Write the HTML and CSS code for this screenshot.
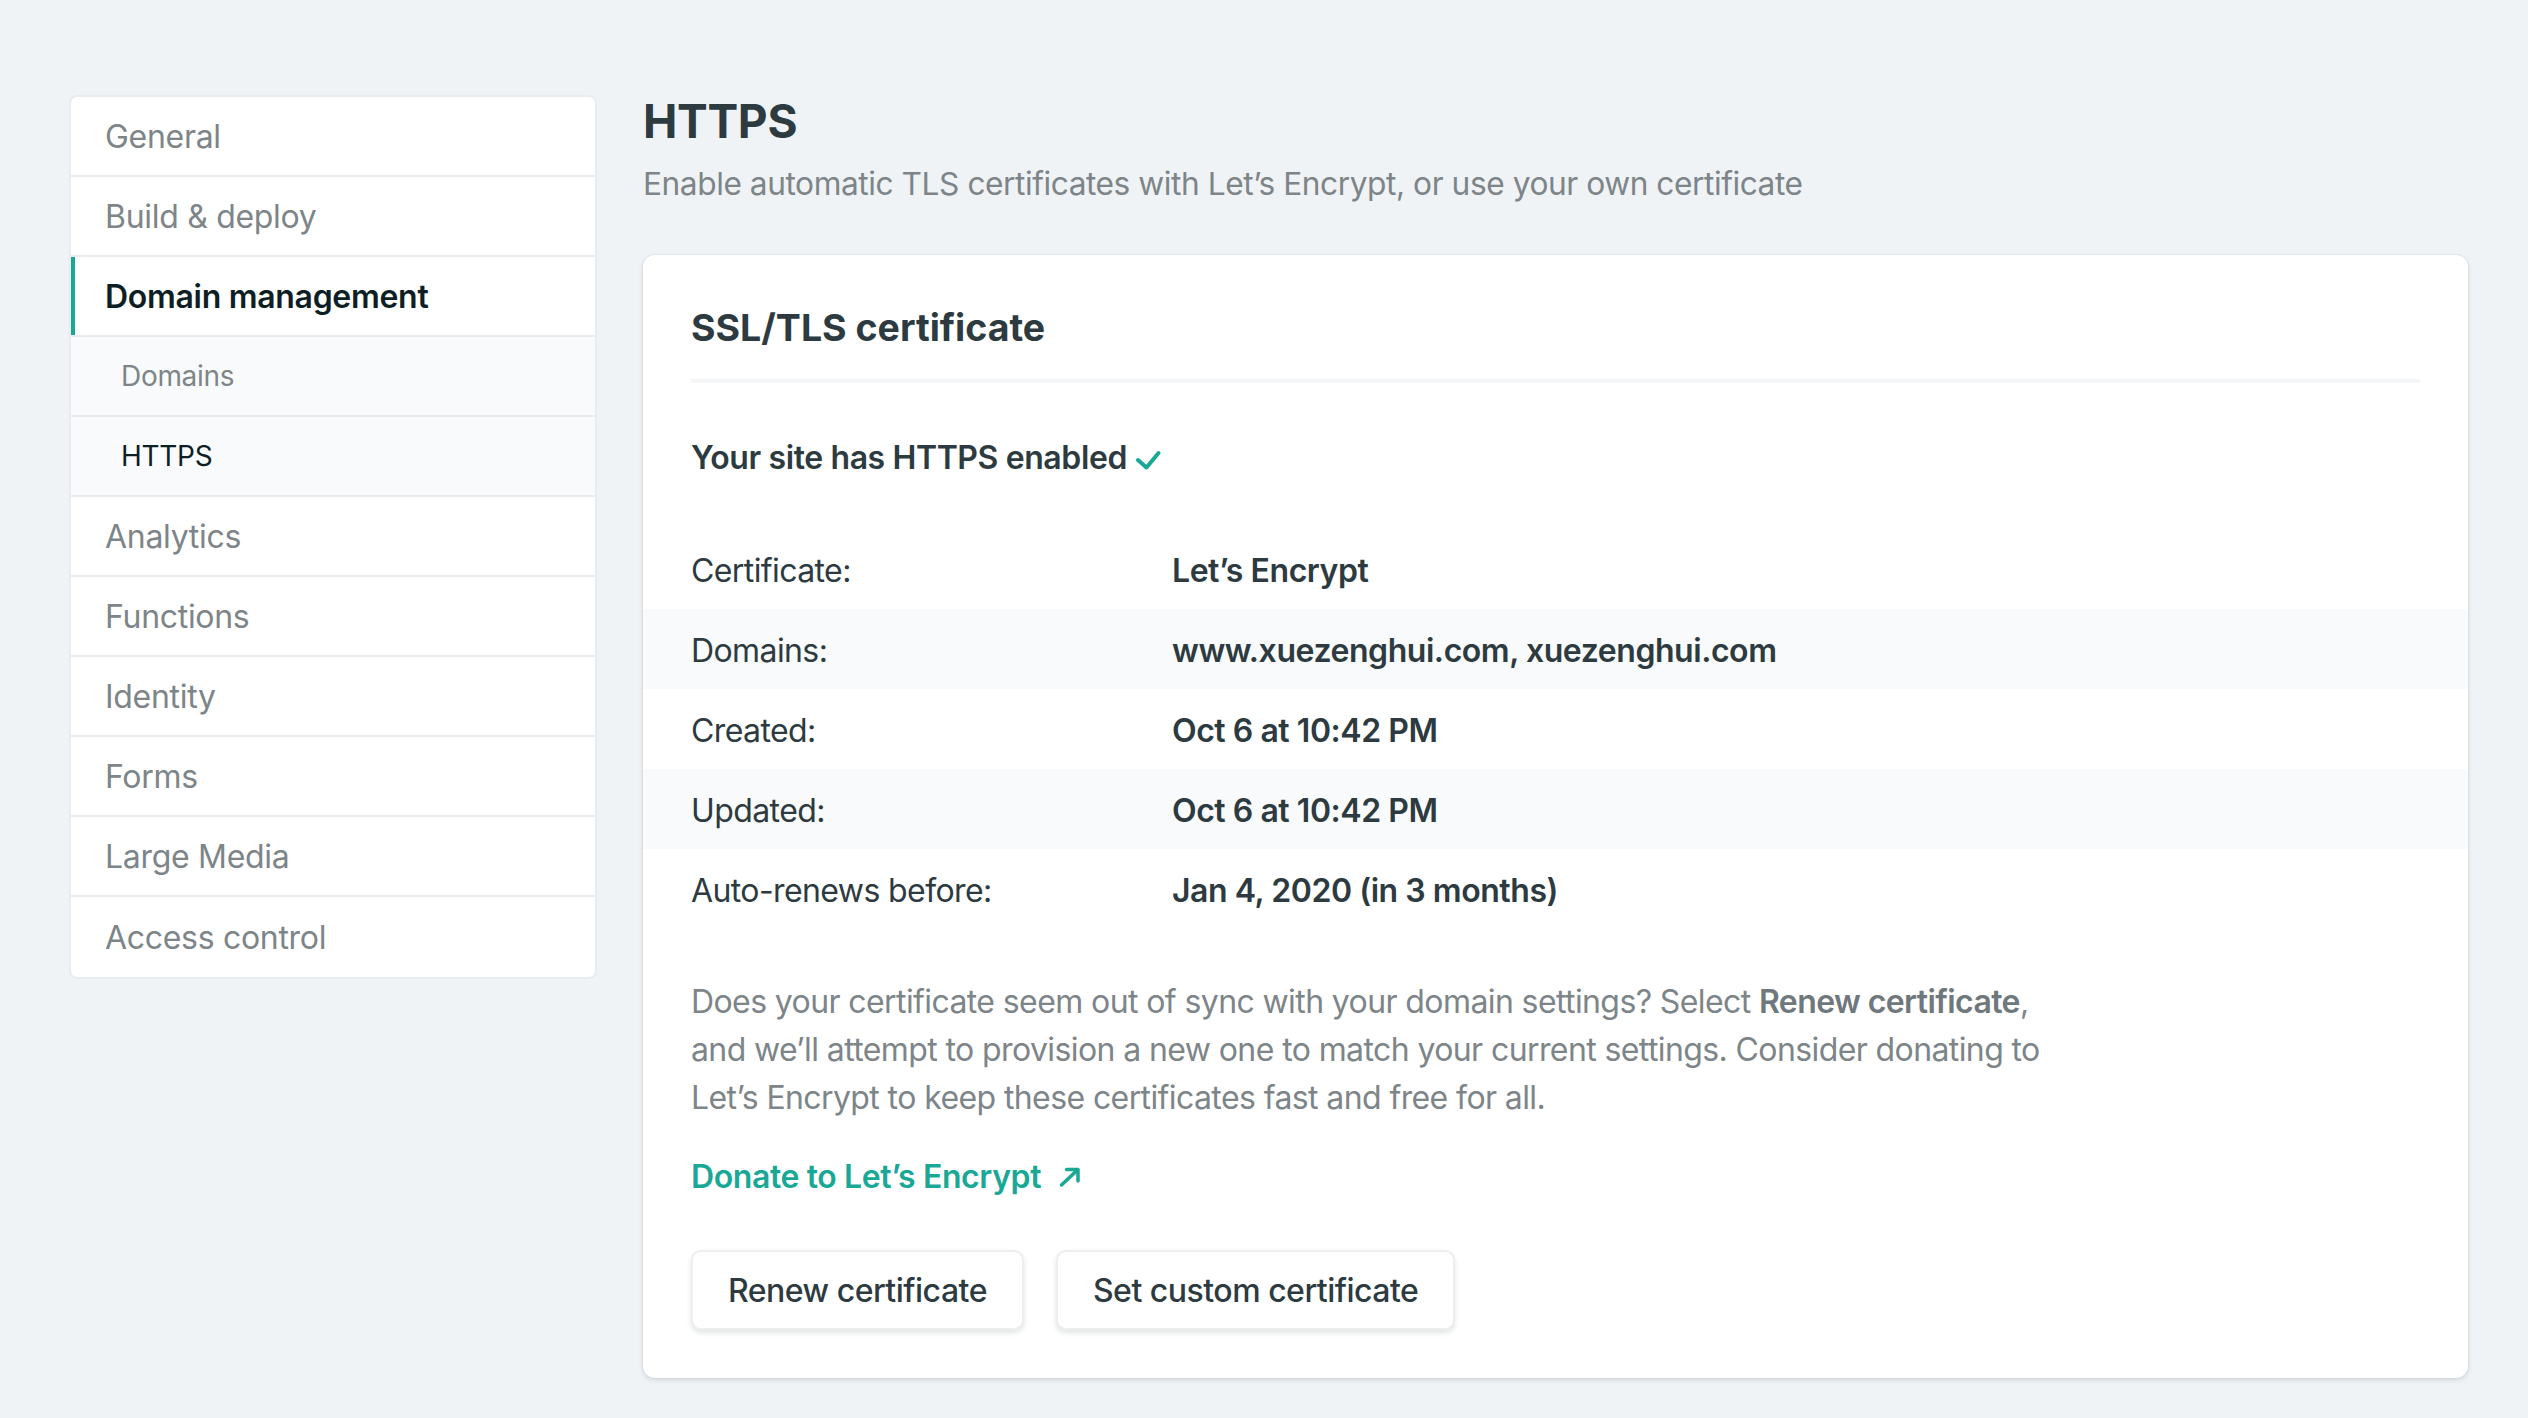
FILE: index.html
```html
<!DOCTYPE html>
<html lang="en">
<head>
<meta charset="utf-8">
<title>HTTPS settings</title>
<link rel="stylesheet" href="styles.css">
</head>
<body>
<div class="page">
  <nav class="sidenav">
    <a class="nav-item">General</a>
    <a class="nav-item">Build &amp; deploy</a>
    <a class="nav-item active">Domain management</a>
    <a class="nav-item sub">Domains</a>
    <a class="nav-item sub current">HTTPS</a>
    <a class="nav-item">Analytics</a>
    <a class="nav-item">Functions</a>
    <a class="nav-item">Identity</a>
    <a class="nav-item">Forms</a>
    <a class="nav-item">Large Media</a>
    <a class="nav-item">Access control</a>
  </nav>
  <main class="main">
    <h1 class="page-title">HTTPS</h1>
    <p class="page-sub">Enable automatic TLS certificates with Let’s Encrypt, or use your own certificate</p>
    <section class="card">
      <header class="card-head">
        <h2 class="card-title">SSL/TLS certificate</h2>
      </header>
      <div class="status">Your site has HTTPS enabled
        <svg class="check" width="26" height="20" viewBox="0 0 26 20"><path d="M3 10 L11.5 17.5 L23.5 3" fill="none" stroke="#1aa896" stroke-width="4" stroke-linecap="round" stroke-linejoin="round"/></svg>
      </div>
      <div class="details">
        <div class="row"><span class="label">Certificate:</span><span class="value">Let’s Encrypt</span></div>
        <div class="row striped"><span class="label">Domains:</span><span class="value">www.xuezenghui.com, xuezenghui.com</span></div>
        <div class="row"><span class="label">Created:</span><span class="value">Oct 6 at 10:42 PM</span></div>
        <div class="row striped"><span class="label">Updated:</span><span class="value">Oct 6 at 10:42 PM</span></div>
        <div class="row"><span class="label">Auto-renews before:</span><span class="value">Jan 4, 2020 (in 3 months)</span></div>
      </div>
      <div class="card-body">
        <p class="note">Does your certificate seem out of sync with your domain settings? Select <strong>Renew certificate</strong>, and we’ll attempt to provision a new one to match your current settings. Consider donating to Let’s Encrypt to keep these certificates fast and free for all.</p>
        <a class="donate">Donate to Let’s Encrypt
          <svg class="arrow" width="24" height="22" viewBox="0 0 24 22"><path d="M3.5 19 L20 3.5 M8.5 3.5 H20 V15" fill="none" stroke="#1aa896" stroke-width="3.5" stroke-linecap="round" stroke-linejoin="round"/></svg>
        </a>
        <div class="actions">
          <button class="btn">Renew certificate</button>
          <button class="btn">Set custom certificate</button>
        </div>
      </div>
    </section>
  </main>
</div>
</body>
</html>
```
FILE: styles.css
```css
* { box-sizing: border-box; }
html, body { margin: 0; padding: 0; }
body {
  background: #f0f3f6;
  font-family: Inter, "Noto Sans", "Liberation Sans", sans-serif;
  color: #2d3b41;
  width: 2528px;
  height: 1418px;
  overflow: hidden;
}
.page {
  display: flex;
  align-items: flex-start;
  gap: 46px;
  padding: 95px 60px 0 69px;
}
.sidenav {
  width: 528px;
  flex: none;
  display: flex;
  flex-direction: column;
  background: #fff;
  border: 2px solid #e9ecee;
  border-radius: 8px;
  overflow: hidden;
}
.nav-item {
  height: 80px;
  display: flex;
  align-items: center;
  padding-left: 34px;
  font-size: 32px;
  color: #7d8589;
  border-bottom: 2px solid #e9ecee;
  letter-spacing: -0.3px;
}
.nav-item:last-child { border-bottom: none; height: 80px; }
.nav-item.active {
  color: #0e1e25;
  font-weight: 600;
  box-shadow: inset 4px 0 0 #1aa896;
}
.nav-item.sub {
  background: #f9fafb;
  font-size: 28px;
  padding-left: 50px;
}
.nav-item.current { color: #0e1e25; }

.main {
  flex: 1;
  display: flex;
  flex-direction: column;
  padding-top: 3px;
}
.page-title {
  margin: 0;
  font-size: 46px;
  line-height: 46px;
  font-weight: 700;
  color: #2d3b41;
  letter-spacing: -0.3px;
}
.page-sub {
  margin: 20px 0 0;
  font-size: 31.7px;
  line-height: 40px;
  color: #7d8589;
  letter-spacing: -0.45px;
}
.card {
  margin-top: 51px;
  background: #fff;
  border-radius: 12px;
  box-shadow: 0 0 0 1px rgba(14, 30, 37, 0.04), 0 2px 5px rgba(14, 30, 37, 0.13);
  padding-bottom: 48px;
}
.card-head {
  margin: 0 48px;
  padding-top: 51px;
  padding-bottom: 29px;
  border-bottom: 4px solid #f3f5f7;
}
.card-title {
  margin: 0;
  font-size: 37.5px;
  line-height: 44px;
  font-weight: 700;
  color: #2d3b41;
  letter-spacing: 0;
}
.status {
  margin: 51px 48px 0;
  display: flex;
  align-items: center;
  gap: 8px;
  font-size: 32px;
  line-height: 48px;
  font-weight: 600;
  color: #2d3b41;
  letter-spacing: -0.4px;
}
.check { margin-top: 4px; }
.details {
  margin-top: 47px;
  display: flex;
  flex-direction: column;
}
.row {
  height: 80px;
  display: flex;
  align-items: center;
  padding: 2px 48px 0;
  font-size: 32px;
  letter-spacing: -0.6px;
}
.row.striped { background: #f9fafb; }
.label {
  width: 481px;
  flex: none;
  color: #2d3b41;
}
.value {
  font-weight: 600;
  color: #2d3b41;
  letter-spacing: -0.45px;
}
.card-body {
  padding: 0 48px;
  display: flex;
  flex-direction: column;
  align-items: flex-start;
}
.note {
  margin: 49px 0 0;
  max-width: 1380px;
  font-size: 32px;
  line-height: 48px;
  color: #7d8589;
  letter-spacing: -0.6px;
}
.note strong { font-weight: 600; color: #6f787c; }
.donate {
  margin-top: 31px;
  display: flex;
  align-items: center;
  gap: 17px;
  font-size: 32px;
  line-height: 48px;
  font-weight: 600;
  color: #1aa896;
  letter-spacing: -0.4px;
}
.actions {
  margin-top: 49px;
  display: flex;
  gap: 32px;
}
.btn {
  height: 80px;
  padding: 0 35px;
  background: #fff;
  border: 2px solid #eceef0;
  border-radius: 10px;
  box-shadow: 0 3px 5px rgba(14, 30, 37, 0.12);
  font-family: inherit;
  font-size: 32px;
  font-weight: 500;
  color: #2d3b41;
  letter-spacing: -0.5px;
}
```
